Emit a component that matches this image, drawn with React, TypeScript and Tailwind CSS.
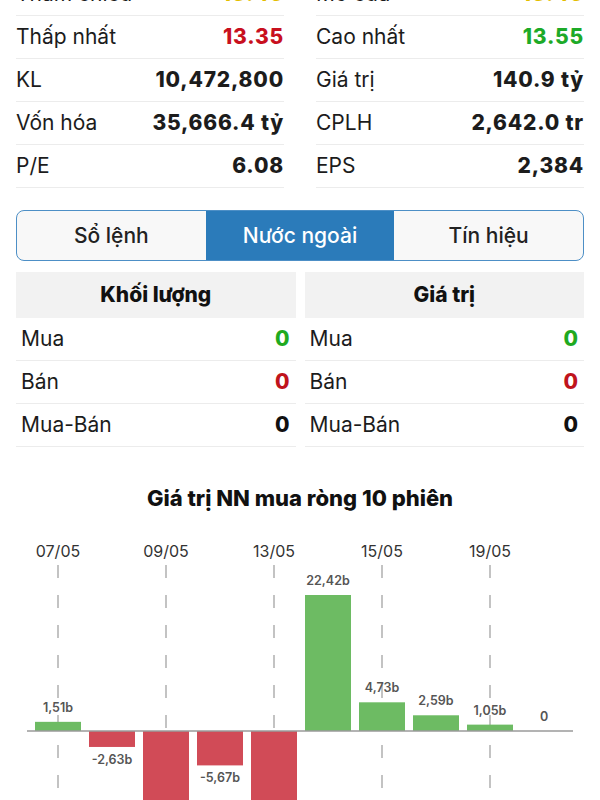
import React from "react";

type Cell = { label: string; value: string; color?: string };

const STATS: [Cell, Cell][] = [
  [
    { label: "Tham chiếu", value: "13.45", color: "text-[#e3bd00]" },
    { label: "Mở cửa", value: "13.45", color: "text-[#e3bd00]" },
  ],
  [
    { label: "Thấp nhất", value: "13.35", color: "text-[#c8101e]" },
    { label: "Cao nhất", value: "13.55", color: "text-[#1daa28]" },
  ],
  [
    { label: "KL", value: "10,472,800" },
    { label: "Giá trị", value: "140.9 tỷ" },
  ],
  [
    { label: "Vốn hóa", value: "35,666.4 tỷ" },
    { label: "CPLH", value: "2,642.0 tr" },
  ],
  [
    { label: "P/E", value: "6.08" },
    { label: "EPS", value: "2,384" },
  ],
];

const FOREIGN = [
  { label: "Mua", value: "0", color: "text-[#1faa1f]" },
  { label: "Bán", value: "0", color: "text-[#c0141c]" },
  { label: "Mua-Bán", value: "0", color: "text-[#111]" },
];

// net foreign buy value, billions (two sessions run off the bottom of the view)
const SESSIONS = [
  { v: 1.51, label: "1,51b" },
  { v: -2.63, label: "-2,63b" },
  { v: -40, label: "" },
  { v: -5.67, label: "-5,67b" },
  { v: -40, label: "" },
  { v: 22.42, label: "22,42b" },
  { v: 4.73, label: "4,73b" },
  { v: 2.59, label: "2,59b" },
  { v: 1.05, label: "1,05b" },
  { v: 0, label: "0" },
];

const DATES = ["07/05", "09/05", "13/05", "15/05", "19/05"];

function StatCell({ c }: { c: Cell }) {
  return (
    <div className="flex h-[43px] items-center justify-between border-b border-[#ececec]">
      <span className="text-[21px] text-[#1c1c1c]">{c.label}</span>
      <span className={`text-[21px] font-extrabold tracking-[0.8px] ${c.color ?? "text-[#1c1c1c]"}`}>{c.value}</span>
    </div>
  );
}

function ForeignTable({ title }: { title: string }) {
  return (
    <div className="flex flex-col">
      <div className="flex h-[46px] items-center justify-center bg-[#f2f2f2] text-[21px] font-extrabold text-[#111]">{title}</div>
      {FOREIGN.map((r) => (
        <div key={r.label} className="flex h-[43px] items-center justify-between border-b border-[#ececec] pl-[5px] pr-[6px]">
          <span className="text-[21px] text-[#1c1c1c]">{r.label}</span>
          <span className={`text-[21px] font-extrabold ${r.color}`}>{r.value}</span>
        </div>
      ))}
    </div>
  );
}

function NetChart() {
  const zero = 219;
  const scale = 136 / 22.42;
  const barW = 46;
  return (
    <svg width={600} height={288} viewBox="0 0 600 288">
      {DATES.map((d, i) => {
        const x = 58 + i * 108;
        return (
          <g key={d}>
            <text x={x} y={45} textAnchor="middle" fontSize="16" fill="#333">{d}</text>
            <line x1={x} y1={53} x2={x} y2={288} stroke="#b0b0b0" strokeWidth="1.5" strokeDasharray="13 17" />
          </g>
        );
      })}
      {SESSIONS.map((s, i) => {
        const cx = 58 + i * 54;
        const h = Math.abs(s.v) * scale;
        const pos = s.v >= 0;
        const top = pos ? zero - h : zero;
        return (
          <g key={i}>
            {s.v !== 0 && (
              <rect x={cx - barW / 2} y={top} width={barW} height={h} fill={pos ? "#6dbb63" : "#d14b57"} />
            )}
            {s.label && (
              <text
                x={cx}
                y={pos ? top - 10 : zero + h + 17}
                textAnchor="middle"
                fontSize="12.5"
                fontWeight="600"
                fill="#555"
              >
                {s.label}
              </text>
            )}
          </g>
        );
      })}
      <line x1={27} y1={zero} x2={573} y2={zero} stroke="#9a9a9a" strokeWidth="1.5" />
    </svg>
  );
}

export default function App() {
  return (
    <div className="h-[800px] w-[600px] overflow-hidden bg-white font-['Inter','Noto_Sans',sans-serif]">
      <div className="mt-[-27px] grid grid-cols-2 gap-x-8 px-4">
        <div className="flex flex-col">
          {STATS.map(([l], i) => (
            <StatCell key={i} c={l} />
          ))}
        </div>
        <div className="flex flex-col">
          {STATS.map(([, r], i) => (
            <StatCell key={i} c={r} />
          ))}
        </div>
      </div>

      <div className="mx-4 mt-[22px] grid h-[51px] grid-cols-3 overflow-hidden rounded-lg border-[1.5px] border-[#4d8fc6] bg-[#f8f8f8] text-[21px] font-medium">
        <div className="flex items-center justify-center text-[#222]">Sổ lệnh</div>
        <div className="flex items-center justify-center bg-[#2b7bba] text-white">Nước ngoài</div>
        <div className="flex items-center justify-center text-[#222]">Tín hiệu</div>
      </div>

      <div className="mx-4 mt-[11px] grid grid-cols-2 gap-x-[9px]">
        <ForeignTable title="Khối lượng" />
        <ForeignTable title="Giá trị" />
      </div>

      <div className="mt-[37px] text-center text-[22px] leading-[28px] font-extrabold text-[#111]">Giá trị NN mua ròng 10 phiên</div>
      <NetChart />
    </div>
  );
}
